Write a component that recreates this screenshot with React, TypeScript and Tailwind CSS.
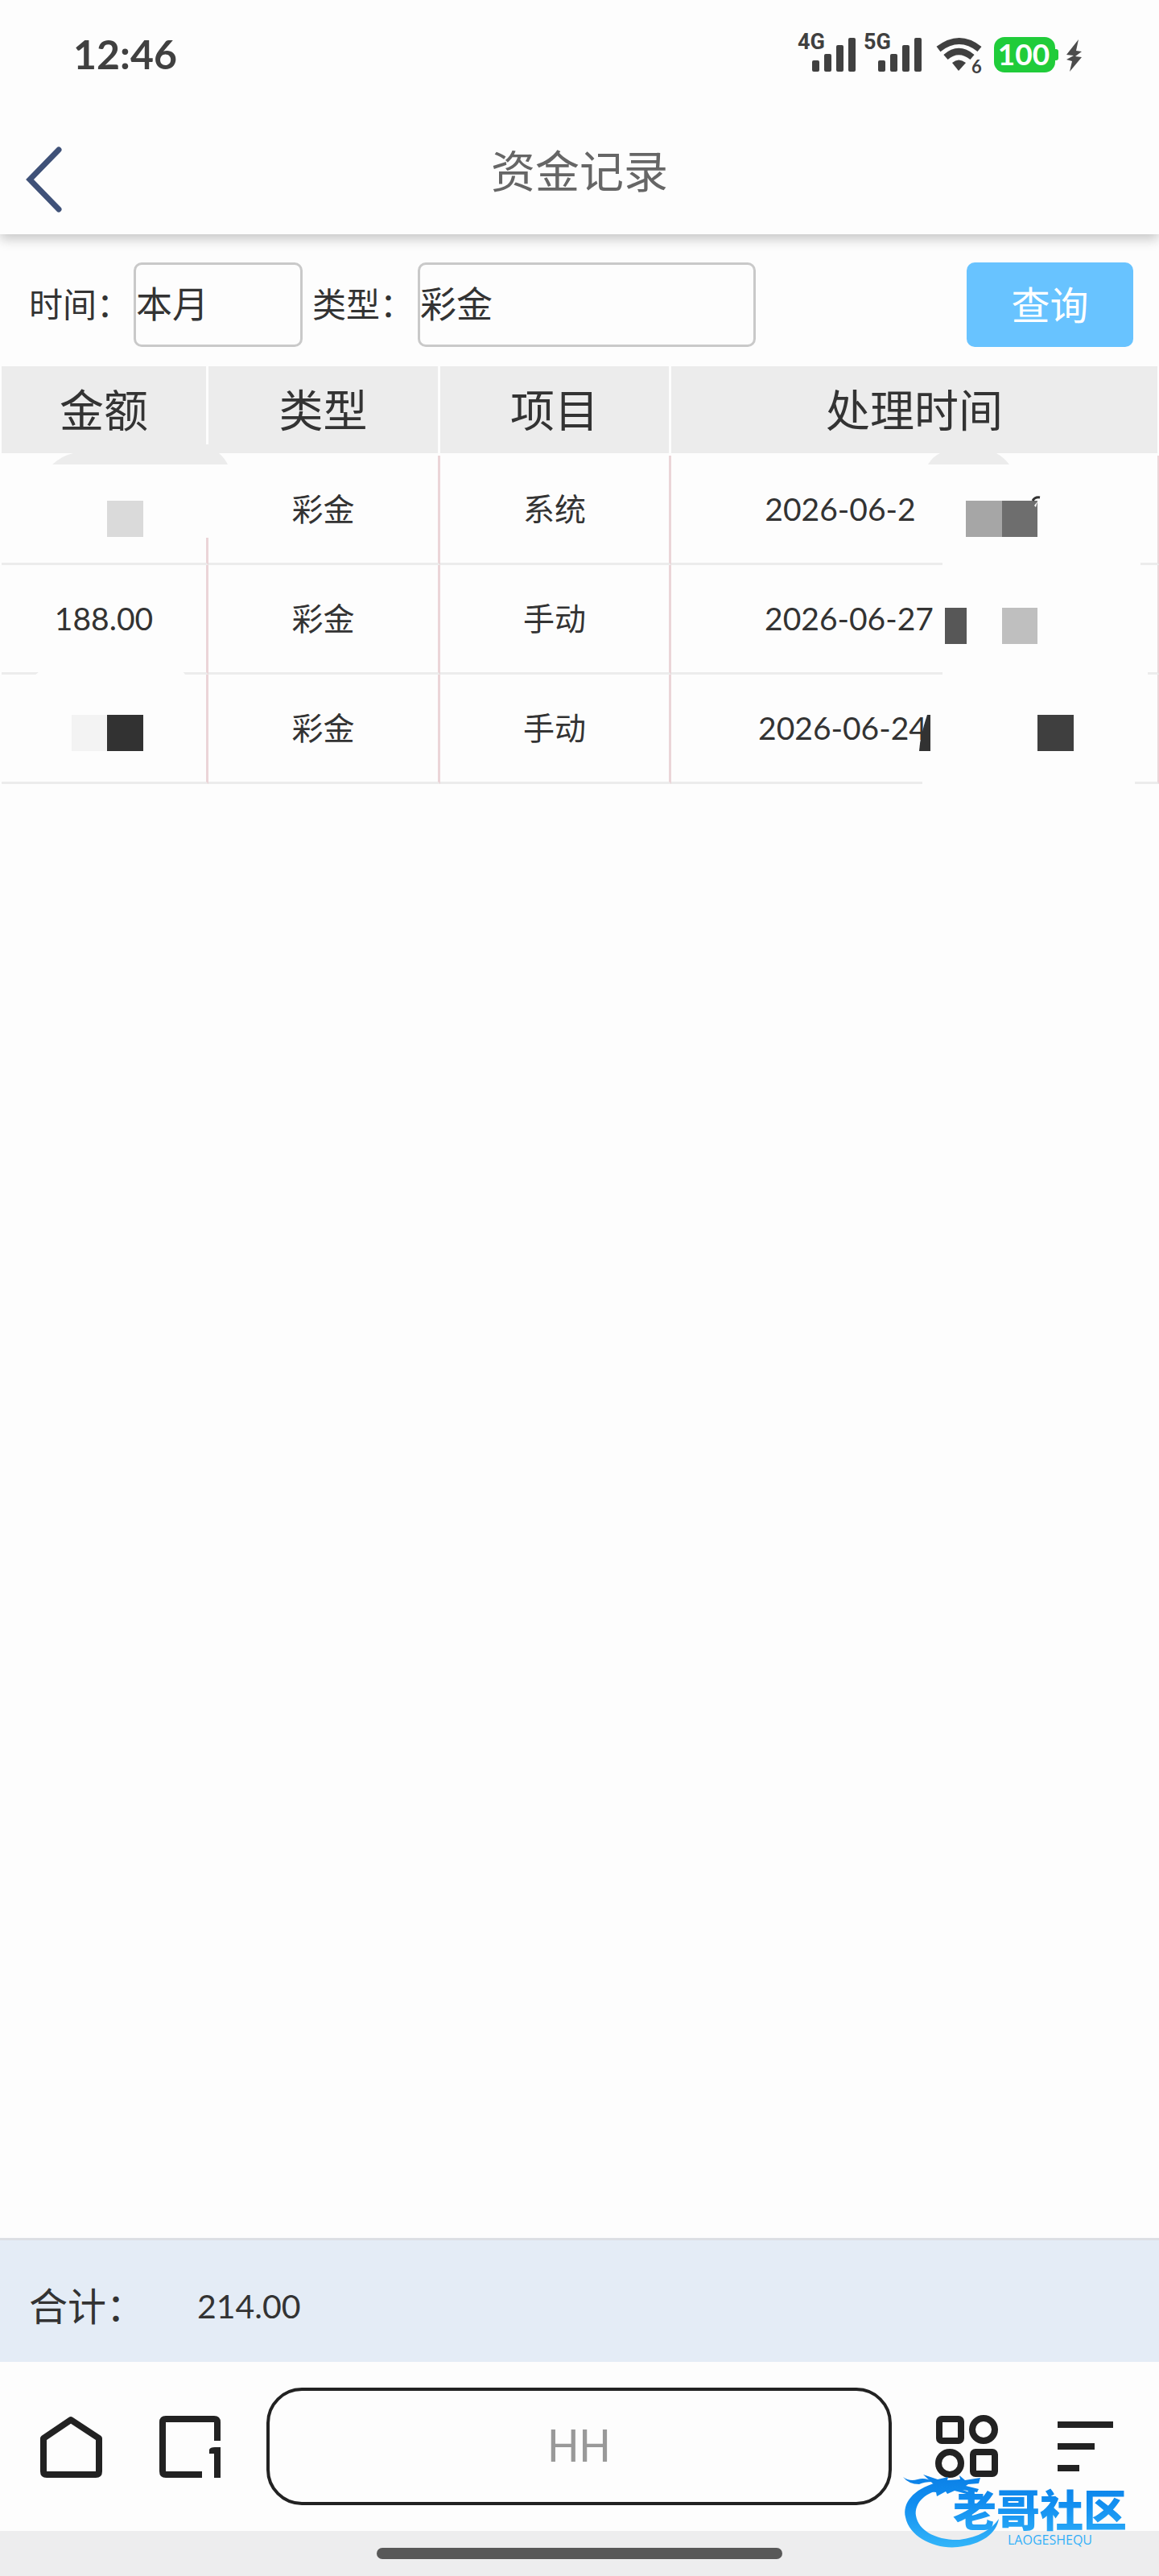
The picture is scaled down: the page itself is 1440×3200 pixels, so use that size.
import { useState } from "react";

type FundRecord = {
  id: number;
  amount: string;
  type: string;
  item: string;
  date: string;
  hiddenWidth: string;
};

const records: FundRecord[] = [
  { id: 1, amount: "", type: "彩金", item: "系统", date: "2026-06-2", hiddenWidth: "w-[184px]" },
  { id: 2, amount: "188.00", type: "彩金", item: "手动", date: "2026-06-27", hiddenWidth: "w-[162px]" },
  { id: 3, amount: "", type: "彩金", item: "手动", date: "2026-06-24", hiddenWidth: "w-[178px]" },
];

export default function App() {
  return (
    <div className="relative flex min-h-screen flex-col bg-[#fdfdfd] font-['Lato','Noto_Sans_CJK_SC',sans-serif] text-[#333]">
      <StatusBar />
      <TitleBar />
      <main className="flex-1">
        <FilterBar />
        <RecordTable />
      </main>
      <div className="flex h-[154px] items-center border-t-3 border-[#dcdfe4] bg-[#e4ecf6] px-9 pt-3">
        <span className="w-[209px] text-[48px]">合计：</span>
        <span className="text-[41px]">214.00</span>
      </div>
      <BottomNav />
      <div className="flex h-14 items-center justify-center bg-[#ededee]">
        <div className="h-[14px] w-[35%] rounded-full bg-[#585858]" />
      </div>
      <Watermark />
    </div>
  );
}

function Signal({ label }: { label: string }) {
  return (
    <svg className="h-[56px] w-[74px] overflow-visible" viewBox="0 0 74 56" fill="#404040">
      <text x="0" y="22" fontSize="27" fontWeight="700" fontFamily="Roboto, sans-serif">{label}</text>
      <rect x="18" y="36" width="9" height="14" rx="2" />
      <rect x="33" y="28" width="9" height="22" rx="2" />
      <rect x="48" y="17" width="9" height="33" rx="2" />
      <rect x="63" y="8" width="9" height="42" rx="2" />
    </svg>
  );
}

function StatusBar() {
  return (
    <div className="relative z-10 flex h-[134px] items-center justify-between bg-[#fdfdfd] pl-[91px] pr-[95px]">
      <span className="text-[50px] font-bold text-[#404040]">12:46</span>
      <div className="flex items-center gap-2">
        <Signal label="4G" />
        <Signal label="5G" />
        {/* wifi 6 */}
        <svg className="ml-2 h-[56px] w-[62px] overflow-visible" viewBox="0 0 62 56">
          <g fill="none" stroke="#404040" strokeWidth="8">
            <path d="M3 22 Q29 2 54 22" />
            <path d="M12 32 Q28 18 45 32" />
          </g>
          <path d="M20 39 Q28 32 37 39 L28 49Z" fill="#404040" />
          <text x="44" y="52" fontSize="22" fontWeight="700" fontFamily="Lato, sans-serif" fill="#404040">6</text>
        </svg>
        <svg className="h-[56px] w-[112px]" viewBox="0 0 112 56">
          <rect x="2" y="7" width="76" height="44" rx="13" fill="#20cc3a" />
          <path d="M76 22 H79 Q82 22 82 25 V33 Q82 36 79 36 H76Z" fill="#20cc3a" />
          <text x="39" y="42" textAnchor="middle" fontSize="37" fontWeight="700" fontFamily="Lato, sans-serif" fill="#fff">100</text>
          <path d="M107 10 L92 29 L101 30 L92 35 L99 37 L96 50 L111 32 L103 31 L111 25 L104 24Z" fill="#4c4c4c" />
        </svg>
      </div>
    </div>
  );
}

function TitleBar() {
  return (
    <header className="relative flex h-[157px] items-center justify-center bg-[#fdfdfd] shadow-[0_6px_14px_rgba(0,0,0,0.22)]">
      <button type="button" aria-label="返回" className="absolute left-7 top-[45px]">
        <svg className="h-[88px] w-[54px]" viewBox="0 0 54 88" fill="none" stroke="#3f5178" strokeWidth="7" strokeLinecap="round">
          <path d="M45 7 L9 44 L45 81" />
        </svg>
      </button>
      <h1 className="text-[55px] text-[#666]">资金记录</h1>
    </header>
  );
}

function FilterBar() {
  const [time, setTime] = useState("本月");
  const [type, setType] = useState("彩金");

  return (
    <form className="flex items-center px-8 pb-6 pt-[35px]" onSubmit={(e) => e.preventDefault()}>
      <label htmlFor="time" className="w-[134px] whitespace-nowrap pl-1 text-[42px]">时间：</label>
      <select
        id="time"
        value={time}
        onChange={(e) => setTime(e.target.value)}
        className="h-[105px] w-[210px] appearance-none rounded-[10px] border-3 border-[#c9c9c9] text-[45px]"
      >
        <option>本月</option>
      </select>
      <label htmlFor="type" className="w-[143px] whitespace-nowrap pl-3 text-[42px]">类型：</label>
      <select
        id="type"
        value={type}
        onChange={(e) => setType(e.target.value)}
        className="h-[105px] w-[420px] appearance-none rounded-[10px] border-3 border-[#c9c9c9] text-[45px]"
      >
        <option>彩金</option>
      </select>
      <button type="submit" className="ml-auto h-[105px] w-[207px] rounded-[10px] bg-[#68c3ff] text-[48px] text-white">
        查询
      </button>
    </form>
  );
}

function RecordTable() {
  return (
    <div className="relative pl-[2px]">
      <table className="w-full table-fixed border-separate border-spacing-0 text-center">
        <colgroup>
          <col className="w-[257px]" />
          <col className="w-[288px]" />
          <col className="w-[287px]" />
          <col />
        </colgroup>
        <thead>
          <tr className="h-[111px] text-[55px]">
            {["金额", "类型", "项目", "处理时间"].map((name) => (
              <th key={name} className="border-b-3 border-r-3 border-[#fdfdfd] bg-[#ececec] p-0 font-normal last:border-r-2">
                {name}
              </th>
            ))}
          </tr>
        </thead>
        <tbody>
          {records.map((r) => (
            <tr key={r.id} className="h-[136px] text-[39px] *:border-b-3 *:border-r-3 *:border-b-[#ececec] *:border-r-[#ebd5d8] *:p-0">
              <td>{r.amount}</td>
              <td>{r.type}</td>
              <td>{r.item}</td>
              <td className="last:border-r-2">
                <div className="flex justify-center">
                  <span>{r.date}</span>
                  <span className={r.hiddenWidth} />
                </div>
              </td>
            </tr>
          ))}
        </tbody>
      </table>
      <AmountMosaic />
      <TimeMosaic />
    </div>
  );
}

// smudged amounts, pinned to the left edge of the table
function AmountMosaic() {
  return (
    <svg className="pointer-events-none absolute left-0 top-0 h-[520px] w-[300px]" viewBox="0 0 300 520">
      <path d="M254 97 H262 V108 H254Z" fill="#ececec" />
      <path d="M65 122 Q77 111 91 108 H272 Q279 114 283 122Z" fill="#ececec" />
      <rect x="250" y="122" width="14" height="91" fill="#fdfdfd" />
      <path d="M49 379 H227 L231 384 H43Z" fill="#fdfdfd" />
      <rect x="133" y="167" width="45" height="45" fill="#dadada" />
      <rect x="89" y="433" width="44" height="45" fill="#f3f3f3" />
      <rect x="133" y="433" width="45" height="45" fill="#323232" />
    </svg>
  );
}

// smudged clock times, pinned to the right edge of the table
function TimeMosaic() {
  return (
    <svg className="pointer-events-none absolute right-0 top-0 h-[530px] w-[310px]" viewBox="0 0 310 530">
      <path d="M23 122 Q29 112 38 108 H108 Q117 113 124 122Z" fill="#ececec" />
      <g fill="#fdfdfd">
        <rect x="41" y="243" width="246" height="5" />
        <rect x="41" y="379" width="255" height="5" />
        <rect x="16" y="515" width="264" height="5" />
      </g>
      <rect x="70" y="167" width="45" height="45" fill="#a6a6a6" />
      <rect x="115" y="167" width="44" height="45" fill="#6e6e6e" />
      <path d="M153 167 Q156 162 162 163" stroke="#333" strokeWidth="3" fill="none" />
      <path d="M155 173 L159 168 L157 175Z" fill="#fdfdfd" />
      <rect x="44" y="300" width="27" height="45" fill="#575757" />
      <rect x="115" y="300" width="44" height="45" fill="#bfbfbf" />
      <path d="M22 433 H26 V478 H12 Q13 460 22 433Z" fill="#323232" />
      <rect x="159" y="433" width="45" height="45" fill="#3f3f3f" />
    </svg>
  );
}

function BottomNav() {
  return (
    <nav className="flex h-[210px] items-center px-[49px] text-[#222]">
      <button type="button" aria-label="主页">
        <svg className="size-[78px]" viewBox="0 0 78 78" fill="none" stroke="currentColor" strokeWidth="8" strokeLinejoin="round">
          <path d="M39 6 L74 29 V70 Q74 74 70 74 H9 Q5 74 5 70 V29Z" />
        </svg>
      </button>
      <button type="button" aria-label="标签页" className="ml-[70px]">
        <svg className="size-[78px]" viewBox="0 0 78 78" fill="none" stroke="currentColor" strokeWidth="8">
          <path d="M54 74 H9 Q5 74 5 70 V9 Q5 5 9 5 H69 Q73 5 73 9 V32" />
          <path d="M77 78 H69 V48 H63 V43 Q64 40 70 40 H77Z" fill="currentColor" stroke="none" />
        </svg>
      </button>
      <input
        aria-label="搜索"
        placeholder="HH"
        className="ml-14 h-[146px] min-w-0 flex-1 rounded-[44px] border-4 border-[#222] text-center font-['Roboto',sans-serif] text-[55px] placeholder:text-[#999]"
      />
      <button type="button" aria-label="应用" className="ml-[54px]">
        <svg className="size-[78px]" viewBox="0 0 78 78" fill="none" stroke="currentColor" strokeWidth="8">
          <rect x="5" y="5" width="27" height="27" rx="3" />
          <circle cx="60" cy="18" r="14" />
          <circle cx="18" cy="60" r="14" />
          <rect x="47" y="46" width="27" height="27" rx="3" />
        </svg>
      </button>
      <button type="button" aria-label="菜单" className="ml-[73px]">
        <svg className="size-[78px]" viewBox="0 0 78 78" fill="currentColor">
          <rect x="1" y="8" width="69" height="8" />
          <rect x="1" y="35" width="46" height="8" />
          <rect x="1" y="62" width="27" height="8" />
        </svg>
      </button>
    </nav>
  );
}

function Watermark() {
  return (
    <svg className="pointer-events-none absolute bottom-7 right-5 h-[100px] w-[300px]" viewBox="0 0 300 100">
      <defs>
        <linearGradient id="wm" gradientUnits="userSpaceOnUse" x1="0" y1="0" x2="0" y2="96">
          <stop offset="0" stopColor="#0a7fe6" />
          <stop offset="0.4" stopColor="#128ef0" />
          <stop offset="1" stopColor="#35b8fa" />
        </linearGradient>
      </defs>
      <g fill="url(#wm)">
        <path d="M44 12 C14 20 1 38 5 55 C10 80 42 95 70 92 C100 89 118 75 121 57 C112 70 96 80 72 83 C44 84 21 72 18 53 C16 38 28 26 47 21Z" />
        <path d="M2 5 Q10 11 20 8 Q30 5 39 11 Q28 11 22 14 Q9 14 2 5Z" />
        <path d="M27 2 L45 8 L58 5 L57 9 L73 8 L72 3 L79 9 L98 6 L96 13 L83 14 L80 16 L96 20 L94 24 L76 21 L90 26 L84 27 L66 22 L57 26 L55 23 L44 29 L43 24 L34 23 L40 14Z" />
        <text x="64" y="67" fontSize="54" fontWeight="900" fontFamily="'Noto Sans CJK SC', sans-serif">老哥社区</text>
        <text x="132" y="89" fontSize="16" fontFamily="'Open Sans', sans-serif">LAOGESHEQU</text>
      </g>
    </svg>
  );
}
